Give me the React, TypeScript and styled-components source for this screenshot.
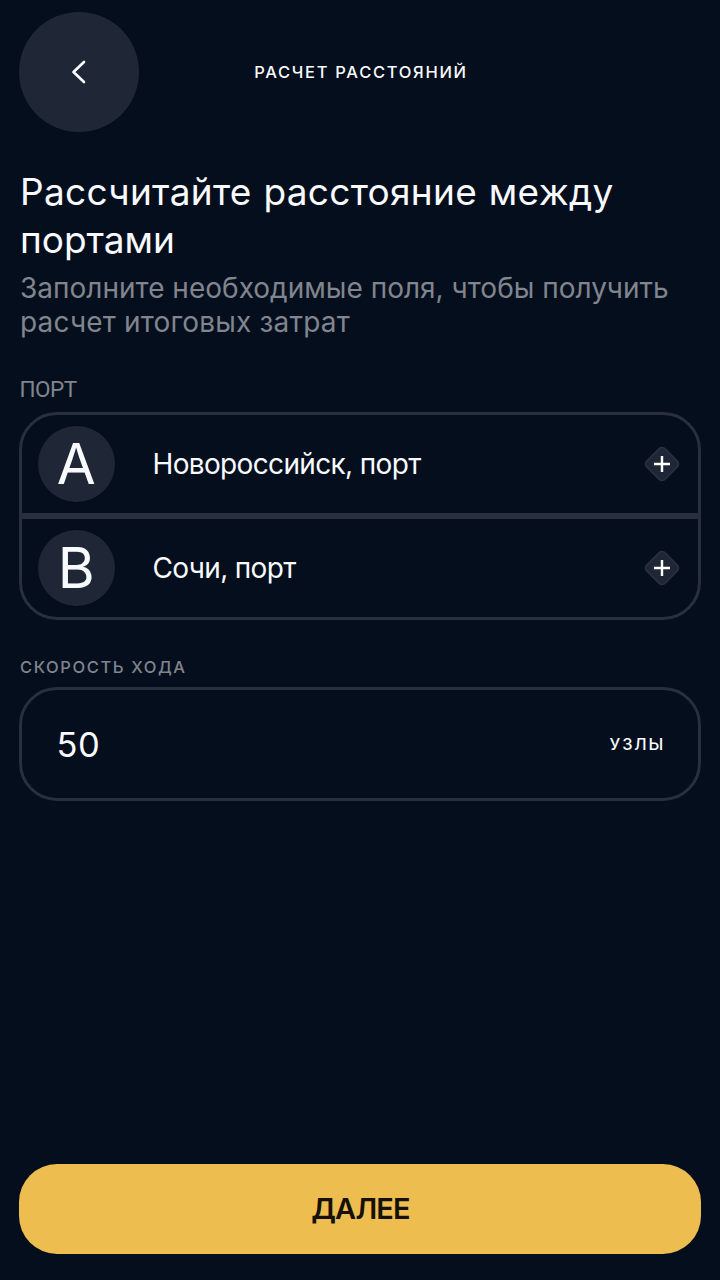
import React from "react";
import styled, { createGlobalStyle } from "styled-components";

const GlobalStyle = createGlobalStyle`
  * { box-sizing: border-box; }
  body { margin: 0; background: #050e1d; }
  button { border: 0; padding: 0; font: inherit; color: inherit; cursor: pointer; }
  h1, h2, p { margin: 0; font-weight: 400; }
`;

const Screen = styled.main`
  display: flex;
  flex-direction: column;
  width: 720px;
  height: 1280px;
  padding: 12px 19px 26px;
  background: #050e1d;
  color: #f8fafe;
  font-family: Inter, sans-serif;
`;

const Header = styled.header`
  display: grid;
  grid-template-columns: 120px 1fr 120px;
  align-items: center;
  height: 120px;
`;

const BackButton = styled.button`
  display: flex;
  align-items: center;
  justify-content: center;
  width: 120px;
  height: 120px;
  border-radius: 50%;
  background: #1f2737;
`;

const HeaderTitle = styled.h1`
  padding-left: 2px;
  text-align: center;
  font-size: 16.5px;
  font-weight: 500;
  line-height: 20px;
  letter-spacing: 1.7px;
`;

const Intro = styled.section`
  display: flex;
  flex-direction: column;
  gap: 7px;
  margin-top: 36px;
  padding-left: 1px;
`;

const Title = styled.h2`
  font-size: 37px;
  line-height: 48px;
  white-space: nowrap;
`;

const Subtitle = styled.p`
  color: #80858e;
  font-size: 28px;
  line-height: 34px;
  white-space: nowrap;
`;

const Line = styled.span<{ $tracking: number; $wordGap?: number }>`
  display: block;
  letter-spacing: ${(p) => p.$tracking}px;
  word-spacing: ${(p) => p.$wordGap ?? 0}px;
`;

const FieldLabel = styled.p<{ $spaced?: boolean }>`
  margin-top: ${(p) => (p.$spaced ? 36 : 37)}px;
  height: ${(p) => (p.$spaced ? 31 : 36)}px;
  padding-left: ${(p) => (p.$spaced ? 1 : 0.5)}px;
  color: #80858e;
  font-family: ${(p) => (p.$spaced ? "Inter" : "Roboto")}, sans-serif;
  font-size: ${(p) => (p.$spaced ? 16.5 : 22.5)}px;
  font-weight: ${(p) => (p.$spaced ? 500 : 400)};
  line-height: ${(p) => (p.$spaced ? 22 : 26)}px;
  letter-spacing: ${(p) => (p.$spaced ? 1.6 : -0.5)}px;
`;

const PortList = styled.div`
  display: flex;
  flex-direction: column;
  height: 208px;
  border: 3px solid #282f3d;
  border-radius: 38px;
`;

const PortRow = styled.div`
  display: flex;
  align-items: center;
  height: 98px;
  padding: 0 17px 0 16px;
  & + & { box-sizing: content-box; border-top: 6px solid #282f3d; }
`;

const PortBadge = styled.span`
  display: flex;
  flex: none;
  align-items: center;
  justify-content: center;
  width: 76.5px;
  height: 76.5px;
  border-radius: 50%;
  background: #1f2737;
  font-size: 56.5px;
  line-height: 76px;
`;

const PortName = styled.span`
  flex: 1;
  margin-left: 38px;
  font-size: 28px;
  line-height: 34px;
  letter-spacing: -0.65px;
`;

const AddButton = styled.button`
  display: flex;
  width: 38px;
  height: 38px;
  background: none;
`;

const SpeedField = styled.div`
  display: flex;
  align-items: center;
  justify-content: space-between;
  height: 114px;
  padding: 0 33px 0 34.5px;
  border: 3px solid #282f3d;
  border-radius: 38px;
`;

const SpeedValue = styled.span`
  padding-top: 2px;
  font-size: 34.5px;
  line-height: 42px;
  letter-spacing: 0.5px;
`;

const SpeedUnit = styled.span`
  font-size: 16.5px;
  font-weight: 500;
  line-height: 20px;
  letter-spacing: 1.8px;
`;

const NextButton = styled.button`
  height: 90px;
  margin-top: auto;
  padding-left: 1px;
  border-radius: 38px;
  background: #edbd50;
  color: #151109;
  font-size: 29px;
  font-weight: 600;
  line-height: 36px;
  letter-spacing: -0.8px;
`;

const ports = [
  { letter: "A", name: "Новороссийск, порт" },
  { letter: "B", name: "Сочи, порт" },
];

function ChevronLeft() {
  return (
    <svg width="24" height="32" viewBox="0 0 24 32" fill="none" stroke="#fff" strokeWidth="2.6" strokeLinecap="round" strokeLinejoin="round">
      <path d="M17 6 6.5 16 17 26" />
    </svg>
  );
}

function DiamondPlus() {
  return (
    <svg width="38" height="38" viewBox="0 0 38 38" fill="none">
      <rect x="6.2" y="6.2" width="25.6" height="25.6" rx="4" transform="rotate(45 19 19)" fill="#1f2737" stroke="#282f3d" strokeWidth="1.8" />
      <path d="M19 11v16M11 19h16" stroke="#fff" strokeWidth="2.4" />
    </svg>
  );
}

export default function App() {
  return (
    <>
      <GlobalStyle />
      <Screen>
        <Header>
          <BackButton aria-label="Назад"><ChevronLeft /></BackButton>
          <HeaderTitle>РАСЧЕТ РАССТОЯНИЙ</HeaderTitle>
        </Header>
        <Intro>
          <Title>
            <Line $tracking={0.3} $wordGap={1}>Рассчитайте расстояние между</Line>
            <Line $tracking={0}>портами</Line>
          </Title>
          <Subtitle>
            <Line $tracking={0.01}>Заполните необходимые поля, чтобы получить</Line>
            <Line $tracking={0.17}>расчет итоговых затрат</Line>
          </Subtitle>
        </Intro>
        <FieldLabel>ПОРТ</FieldLabel>
        <PortList>
          {ports.map((port) => (
            <PortRow key={port.letter}>
              <PortBadge>{port.letter}</PortBadge>
              <PortName>{port.name}</PortName>
              <AddButton aria-label="Добавить"><DiamondPlus /></AddButton>
            </PortRow>
          ))}
        </PortList>
        <FieldLabel $spaced>СКОРОСТЬ ХОДА</FieldLabel>
        <SpeedField>
          <SpeedValue>50</SpeedValue>
          <SpeedUnit>УЗЛЫ</SpeedUnit>
        </SpeedField>
        <NextButton>ДАЛЕЕ</NextButton>
      </Screen>
    </>
  );
}
